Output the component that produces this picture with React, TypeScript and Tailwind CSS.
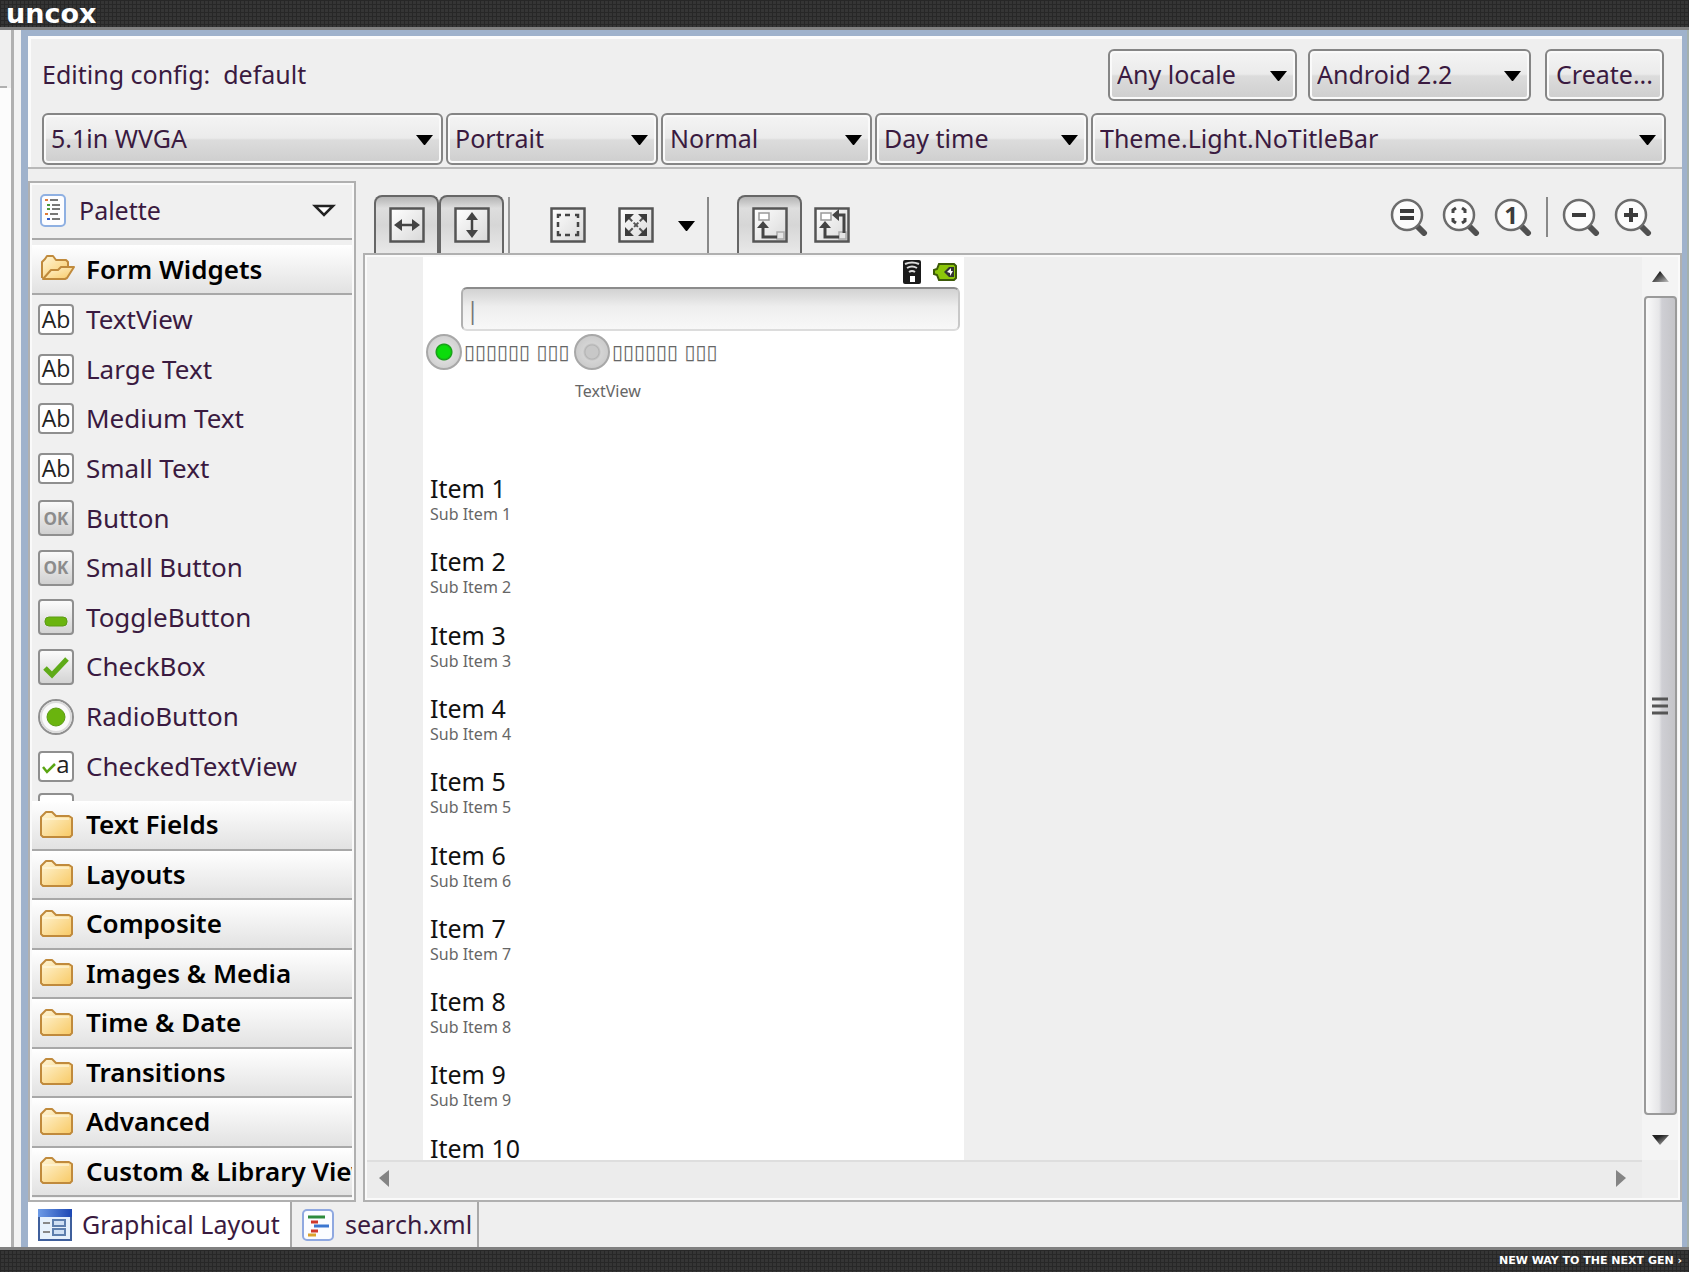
import React, { useState } from 'react';

const widgets = [
    { name: 'TextView', icon: 'ab' },
    { name: 'Large Text', icon: 'ab' },
    { name: 'Medium Text', icon: 'ab' },
    { name: 'Small Text', icon: 'ab' },
    { name: 'Button', icon: 'ok' },
    { name: 'Small Button', icon: 'ok' },
    { name: 'ToggleButton', icon: 'toggle' },
    { name: 'CheckBox', icon: 'check' },
    { name: 'RadioButton', icon: 'radio' },
    { name: 'CheckedTextView', icon: 'checked' },
];

const categories = [
    'Text Fields',
    'Layouts',
    'Composite',
    'Images & Media',
    'Time & Date',
    'Transitions',
    'Advanced',
    'Custom & Library Views',
];

const items = Array.from({ length: 10 }, (_, i) => i + 1);

const Defs = () => (
    <svg width="0" height="0" className="absolute" aria-hidden="true">
        <defs>
            <linearGradient id="metal" x1="0" y1="0" x2="0" y2="1">
                <stop offset="0" stopColor="#fdfdfd" />
                <stop offset="1" stopColor="#d2d2d2" />
            </linearGradient>
            <linearGradient id="tile" x1="0" y1="0" x2="1" y2="1">
                <stop offset="0" stopColor="#ffffff" />
                <stop offset="1" stopColor="#d8d8d8" />
            </linearGradient>
            <linearGradient id="gold" x1="0" y1="0" x2="1" y2="1">
                <stop offset="0" stopColor="#fff6d8" />
                <stop offset="1" stopColor="#f8c964" />
            </linearGradient>
            <linearGradient id="bluebar" x1="0" y1="0" x2="1" y2="0">
                <stop offset="0" stopColor="#6d9be6" />
                <stop offset="1" stopColor="#1c47b4" />
            </linearGradient>
            <linearGradient id="arrow" x1="0" y1="0" x2="1" y2="1">
                <stop offset="0.3" stopColor="#222222" />
                <stop offset="1" stopColor="#c4c4c4" />
            </linearGradient>
        </defs>
    </svg>
);

const Folder = () => (
    <svg width="36" height="30" viewBox="0 0 36 30" aria-hidden="true">
        <path d="M2 25V7l3-3 2-2h6l4 4h13l3 2v17l-2 2H4z" fill="url(#gold)" stroke="#c08a3c" strokeWidth="2" strokeLinejoin="round" />
        <path d="M4 9h26" fill="none" stroke="#fffbe9" strokeWidth="1" />
    </svg>
);

const OpenFolder = () => (
    <svg width="36" height="30" viewBox="0 0 36 30" aria-hidden="true">
        <path d="M3 24V8l3-3 2-3h6l3 4h10l2 2v6" fill="url(#gold)" stroke="#c08a3c" strokeWidth="2" strokeLinejoin="round" />
        <path d="M4 25l8-9h7l3-3h13l-7 11-2 1z" fill="url(#gold)" stroke="#c08a3c" strokeWidth="2" strokeLinejoin="round" />
    </svg>
);

const WidgetIcon = ({ kind }: { kind: string }) => {
    if (kind === 'ab') {
        return (
            <span className="flex h-[31px] w-9 items-center justify-center rounded border-2 border-[#8f8f8f] bg-white pb-px font-['Open_Sans',sans-serif] text-[23px] leading-none text-[#222]">
                Ab
            </span>
        );
    }
    if (kind === 'ok') {
        return (
            <span className="flex h-9 w-9 items-center justify-center rounded border-2 border-[#8f8f8f] bg-linear-to-b from-[#fafafa] to-[#d0d0d0] font-['Open_Sans',sans-serif] text-[17px] leading-none font-bold text-[#8c8c8c]">
                OK
            </span>
        );
    }
    if (kind === 'checked') {
        return (
            <span className="flex h-[31px] w-9 items-center justify-center rounded border-2 border-[#8f8f8f] bg-white font-['Open_Sans',sans-serif] text-[24px] leading-none text-[#222]">
                <svg width="14" height="12" viewBox="0 0 14 12" aria-hidden="true" className="mt-1">
                    <path d="M1 5l4 5 8-8" fill="none" stroke="#5aa512" strokeWidth="2.5" />
                </svg>
                <span className="-mt-1">a</span>
            </span>
        );
    }
    return (
        <svg width="36" height="36" viewBox="0 0 36 36" aria-hidden="true">
            {kind === 'radio' ? (
                <>
                    <circle cx="18" cy="18" r="17" fill="#fafafa" stroke="#8f8f8f" strokeWidth="2" />
                    <circle cx="18" cy="18" r="15" fill="none" stroke="#dcdcdc" strokeWidth="2" />
                    <circle cx="18" cy="18" r="9" fill="#6ab40e" stroke="#5c9c14" strokeWidth="1" />
                </>
            ) : (
                <rect x="1" y="1" width="34" height="34" rx="3" fill="url(#metal)" stroke="#8f8f8f" strokeWidth="2" />
            )}
            {kind === 'toggle' && <rect x="7" y="18" width="22" height="9" rx="4" fill="#6ab40e" stroke="#5c9c14" />}
            {kind === 'check' && <path d="M7 19l7 7 15-16" fill="none" stroke="#5fab18" strokeWidth="5" />}
        </svg>
    );
};

const Caret = ({ className = '' }: { className?: string }) => (
    <svg width="17" height="10" viewBox="0 0 17 10" className={className} aria-hidden="true">
        <path d="M0 0h17L9 10H8z" fill="#000" />
    </svg>
);

const Combo = ({ label, value, className = '' }: { label: string; value: string; className?: string }) => (
    <div className={`relative ${className}`}>
        <select
            aria-label={label}
            className="h-[52px] w-full appearance-none rounded-md border-2 border-[#858585] bg-[linear-gradient(#f4f4f4_0%,#ebebeb_48%,#dcdcdc_52%,#cecece_100%)] pr-8 pl-[7px] text-[25px] text-[#3a1a40] shadow-[inset_0_0_0_2px_#fafafa]"
        >
            <option>{value}</option>
        </select>
        <Caret className="pointer-events-none absolute top-[22px] right-[10px]" />
    </div>
);

const toolPaths: Record<string, React.ReactNode> = {
    width: (
        <>
            <path d="M9 18h18" stroke="#444" strokeWidth="2.5" />
            <path d="M5 18l8-6v12zM31 18l-8-6v12z" fill="#444" />
        </>
    ),
    height: (
        <>
            <path d="M18 9v18" stroke="#444" strokeWidth="2.5" />
            <path d="M18 5l-6 8h12zM18 31l-6-8h12z" fill="#444" />
        </>
    ),
    marquee: (
        <path d="M8 11V8h3M15 8h5M25 8h3v3M28 15v5M28 24v4h-3M20 28h-5M11 28H8v-4M8 20v-5" fill="none" stroke="#444" strokeWidth="2.5" />
    ),
    expand: (
        <>
            <path d="M10 10l16 16M26 10L10 26" stroke="#555" strokeWidth="2" strokeDasharray="6 2" />
            <path d="M7 7h9l-9 9zM29 7v9l-9-9zM7 29v-9l9 9zM29 29h-9l9-9z" fill="#3c3c3c" />
        </>
    ),
    parent: (
        <>
            <rect x="7" y="6" width="10" height="7" fill="#fff" stroke="#999" strokeWidth="1.5" />
            <rect x="25" y="25" width="7" height="7" fill="#e4e4e4" stroke="#aaa" strokeWidth="1.5" />
            <path d="M11 19v11h14" fill="none" stroke="#444" strokeWidth="3" />
            <path d="M11 14l-6 7h12z" fill="#444" />
        </>
    ),
    swap: (
        <>
            <rect x="7" y="6" width="10" height="7" fill="#fff" stroke="#999" strokeWidth="1.5" />
            <rect x="25" y="25" width="7" height="7" fill="#e4e4e4" stroke="#aaa" strokeWidth="1.5" />
            <path d="M11 19v11h14M24 8h6v18" fill="none" stroke="#444" strokeWidth="3" />
            <path d="M11 14l-6 7h12zM18 8l7-6v12z" fill="#444" />
        </>
    ),
};

const ToolIcon = ({ kind }: { kind: string }) => (
    <svg width="36" height="36" viewBox="0 0 36 36" aria-hidden="true">
        <rect x="1.5" y="1.5" width="33" height="33" fill="url(#tile)" stroke="#555" strokeWidth="2.5" />
        {toolPaths[kind]}
    </svg>
);

const ToolButton = ({ kind, label, pressed = false }: { kind: string; label: string; pressed?: boolean }) => (
    <button
        type="button"
        aria-label={label}
        aria-pressed={pressed}
        className={
            pressed
                ? 'flex h-[58px] w-[65px] items-center justify-center rounded-t-lg border-2 border-b-0 border-[#666] bg-[linear-gradient(#b4b4b4,#dedede_20%,#d6d6d6_50%,#e8e8e8)]'
                : 'flex h-[57px] w-9 items-center justify-center'
        }
    >
        <ToolIcon kind={kind} />
    </button>
);

const zoomMarks: Record<string, React.ReactNode> = {
    fit: <path d="M10 13h14M10 20h14" stroke="#3c3c3c" strokeWidth="4" />,
    frame: (
        <path d="M11 15v-3l3-2M20 10l3 2v3M23 20v3l-3 2M14 25l-3-2v-3" fill="none" stroke="#444" strokeWidth="3" />
    ),
    out: <path d="M10 17h14" stroke="#3c3c3c" strokeWidth="4" />,
    in: <path d="M10 17h14M17 10v14" stroke="#3c3c3c" strokeWidth="4" />,
};

const ZoomButton = ({ kind, label }: { kind: string; label: string }) => (
    <button type="button" aria-label={label} className="h-[38px] w-[38px]">
        <svg width="38" height="38" viewBox="0 0 38 38" aria-hidden="true">
            <path d="M26 27l8 8" stroke="#505050" strokeWidth="6" strokeLinecap="round" />
            <circle cx="17" cy="17" r="15" fill="#fcfcfc" stroke="#6c6c6c" strokeWidth="2.5" />
            {kind === 'one' ? (
                <text x="17" y="26" textAnchor="middle" fontFamily="Open Sans" fontWeight="700" fontSize="24" fill="#3c3c3c">
                    1
                </text>
            ) : (
                zoomMarks[kind]
            )}
        </svg>
    </button>
);

const Palette = () => (
    <aside className="flex w-[328px] shrink-0 flex-col overflow-hidden border-2 border-[#b0b0b0] bg-[#f0f0f0] px-0.5 text-[26px] shadow-[inset_0_0_0_2px_#fafafa]">
        <div className="flex h-[57px] shrink-0 items-center border-b-2 border-[#a8a8a8] pr-4 pl-[8px]">
            <svg width="26" height="33" viewBox="0 0 26 33" aria-hidden="true">
                <rect x="1" y="1" width="24" height="31" rx="4" fill="#fdfdff" stroke="#8fb0e2" strokeWidth="2" />
                <path d="M10 6h8M12 11h8M12 15h8M10 20h8M12 25h8" stroke="#777" strokeWidth="2" />
                <path d="M5 6h3M5 20h3" stroke="#e07b39" strokeWidth="2" />
                <path d="M7 11h3M7 15h3" stroke="#4b9a3c" strokeWidth="2" />
                <path d="M7 25h3" stroke="#3157c8" strokeWidth="2" />
            </svg>
            <span className="ml-[13px] flex-1 text-[25px] text-[#3a1a40]">Palette</span>
            <button type="button" aria-label="Palette menu">
                <svg width="24" height="14" viewBox="0 0 24 14" aria-hidden="true">
                    <path d="M3 2h18l-9 9z" fill="#fff" stroke="#222" strokeWidth="2.5" />
                </svg>
            </button>
        </div>
        <button
            type="button"
            className="mt-[5px] flex h-[50px] shrink-0 items-center gap-[11px] border-b-2 border-[#a8a8a8] bg-linear-to-b from-white to-[#e2e2e2] pl-[7px] text-left font-semibold text-black"
        >
            <OpenFolder />
            Form Widgets
        </button>
        <div className="flex-1 overflow-hidden">
            <ul className="grid h-124 auto-rows-fr text-[#3a1a40]">
                {widgets.map(w => (
                    <li key={w.name} className="flex items-center gap-3 pl-[6px]">
                        <WidgetIcon kind={w.icon} />
                        {w.name}
                    </li>
                ))}
            </ul>
            <div className="mt-0.5 ml-[6px] h-[31px] w-9 rounded border-2 border-[#8f8f8f] bg-white" />
        </div>
        <div className="grid h-[399px] shrink-0 auto-rows-fr pb-[3px]">
            {categories.map(name => (
                <button
                    key={name}
                    type="button"
                    className="flex items-center gap-[11px] overflow-hidden border-b-2 border-[#a8a8a8] bg-linear-to-b from-white to-[#e2e2e2] pl-[7px] text-left font-semibold whitespace-nowrap text-black"
                >
                    <span className="w-9 shrink-0">
                        <Folder />
                    </span>
                    {name}
                </button>
            ))}
        </div>
    </aside>
);

const Toolbar = () => (
    <div className="flex h-[72px] shrink-0 items-end justify-between pl-[11px]">
        <div className="flex items-end">
            <ToolButton kind="width" label="Toggle fill width" pressed />
            <ToolButton kind="height" label="Toggle fill height" pressed />
            <span className="ml-1 h-[56px] w-0.5 bg-[#999]" />
            <span className="ml-10">
                <ToolButton kind="marquee" label="Select" />
            </span>
            <span className="ml-8">
                <ToolButton kind="expand" label="Change size" />
            </span>
            <button type="button" aria-label="More sizes" className="ml-6 flex h-[55px] items-center">
                <Caret />
            </button>
            <span className="ml-3 h-[56px] w-0.5 bg-[#888]" />
            <span className="ml-7">
                <ToolButton kind="parent" label="Show parent" pressed />
            </span>
            <span className="ml-3">
                <ToolButton kind="swap" label="Show included" />
            </span>
        </div>
        <div className="flex items-center gap-[14px] self-center pr-[30px]">
            <ZoomButton kind="fit" label="Emulate real size" />
            <ZoomButton kind="frame" label="Zoom to fit" />
            <ZoomButton kind="one" label="Zoom to 100%" />
            <span className="h-10 w-0.5 bg-[#888]" />
            <ZoomButton kind="out" label="Zoom out" />
            <ZoomButton kind="in" label="Zoom in" />
        </div>
    </div>
);

const Phone = () => {
    const [picked, setPicked] = useState(0);

    return (
        <div className="ml-14 w-[541px] overflow-hidden bg-white text-[#666]">
            <div className="flex h-[30px] items-center justify-end gap-3 pr-[7px]">
                <svg width="18" height="24" viewBox="0 0 18 24" aria-hidden="true">
                    <rect width="18" height="24" rx="2" fill="#1a1a1a" />
                    <path d="M2 4q7-3 14 0M4 8q5-3 10 0M6 12q3-2 6 0" fill="none" stroke="#ddd" strokeWidth="2" />
                    <rect x="7" y="16" width="5" height="6" fill="#fff" />
                </svg>
                <svg width="24" height="20" viewBox="0 0 24 20" aria-hidden="true">
                    <path d="M1 8l3-1 2-5h15l2 2v12l-2 2H6l-2-5-3-1z" fill="#8cc60a" stroke="#3d5a08" strokeWidth="2" />
                    <path d="M11 10l5-5h5v10h-5z" fill="#333" />
                    <path d="M14 10l4-4v3h2l-3 5v-3z" fill="#fff" />
                </svg>
            </div>
            <input
                aria-label="Search"
                defaultValue="|"
                className="mr-1 ml-[38px] block h-[44px] w-[499px] rounded-md border-2 border-t-[#8c8c8c] border-r-[#c8c8c8] border-b-[#dcdcdc] border-l-[#b0b0b0] bg-[linear-gradient(#d2d2d2,#eeeeee_45%,#f8f8f8)] px-[3px] font-['Open_Sans',sans-serif] text-[24px] text-[#777]"
            />
            <div className="mt-0.5 flex pl-[3px]">
                {[0, 1].map(i => (
                    <label key={i} className="flex h-[38px] w-[148px] items-center gap-0.5 font-['DejaVu_Sans',sans-serif] text-[20px] whitespace-nowrap">
                        <input
                            type="radio"
                            name="mode"
                            checked={picked === i}
                            onChange={() => setPicked(i)}
                            className="h-9 w-9 shrink-0 appearance-none rounded-full border-2 border-[#a8a8a8] bg-[radial-gradient(circle,#c8c8c8_0_6px,#b4b4b4_7px,#d4d4d4_9px,#c4c4c4_100%)] checked:bg-[radial-gradient(circle,#0bdc0b_0_6px,#1a9a1a_8px,#dcdcdc_9px,#c8c8c8_100%)]"
                        />
                        ▯▯▯▯▯▯ ▯▯▯
                    </label>
                ))}
            </div>
            <p className="mt-2 pl-[152px] text-[16px] leading-6">TextView</p>
            <ul className="mt-[69px] grid h-[733px] auto-rows-fr">
                {items.map(n => (
                    <li key={n} className="flex flex-col pl-[7px]">
                        <span className="text-[25px] leading-8 text-[#111]">Item {n}</span>
                        <span className="text-[16px] leading-5">Sub Item {n}</span>
                    </li>
                ))}
            </ul>
        </div>
    );
};

const Canvas = () => (
    <div className="grid min-h-0 flex-1 grid-cols-[1fr_36px] grid-rows-[1fr_38px] border-2 border-[#b0b0b0] bg-[#efefef] p-0.5 shadow-[inset_0_0_0_2px_#fafafa]">
        <div className="flex min-h-0 overflow-hidden">
            <Phone />
        </div>
        <div className="flex flex-col items-center bg-[#f4f4f4]">
            <button type="button" aria-label="Scroll up" className="flex h-[39px] items-center">
                <svg width="17" height="11" viewBox="0 0 17 11" aria-hidden="true">
                    <path d="M8 0l9 11H0z" fill="url(#arrow)" />
                </svg>
            </button>
            <div className="flex w-[33px] flex-1 items-center justify-center rounded border-2 border-[#9a9a9a] bg-[linear-gradient(90deg,#fafafa,#e6e6e8_45%,#cfcfd4_55%,#c4c4c8)]">
                <svg width="16" height="18" viewBox="0 0 16 18" aria-hidden="true">
                    <path d="M0 2h16M0 9h16M0 16h16" stroke="#555" strokeWidth="3" />
                </svg>
            </div>
            <button type="button" aria-label="Scroll down" className="flex h-[45px] items-center pt-1">
                <svg width="17" height="10" viewBox="0 0 17 10" aria-hidden="true">
                    <path d="M0 0h17L8 10z" fill="url(#arrow)" />
                </svg>
            </button>
        </div>
        <div className="flex items-center justify-between border-t-2 border-[#dedede] bg-[#ececec] pr-4 pb-1 pl-3">
            <button type="button" aria-label="Scroll left">
                <svg width="10" height="17" viewBox="0 0 10 17" aria-hidden="true">
                    <path d="M10 0v17L0 8z" fill="#848484" />
                </svg>
            </button>
            <button type="button" aria-label="Scroll right">
                <svg width="10" height="17" viewBox="0 0 10 17" aria-hidden="true">
                    <path d="M0 0v17l10-9z" fill="#848484" />
                </svg>
            </button>
        </div>
    </div>
);

const strip = 'bg-[#353535] bg-[linear-gradient(#272727_1px,transparent_1px),linear-gradient(90deg,#272727_1px,transparent_1px)] bg-[size:4px_4px]';

const App: React.FC = () => (
    <div className="flex h-screen flex-col overflow-hidden bg-[#efefef] font-['Noto_Sans','Open_Sans',sans-serif]">
        <Defs />
        <header className={`flex h-[30px] shrink-0 items-end border-b-3 border-[#808080] pl-[6px] ${strip}`}>
            <h1 className="font-['DejaVu_Sans',sans-serif] text-[27px] leading-[27px] font-bold text-white">uncox</h1>
        </header>

        <div className="flex min-h-0 flex-1">
            <div className="flex w-[21px] shrink-0">
                <div className="flex w-[11px] flex-col">
                    <div className="h-[58px] w-[7px] border-b-2 border-[#b0b0b0]" />
                    <div className="flex-1 bg-[#fcfcfc]" />
                </div>
                <div className="w-[3px] bg-[#b0b0b0]" />
                <div className="flex-1 bg-[#f2f2f2]" />
            </div>
            <div className="flex min-w-0 flex-1 flex-col border-t-6 border-r-5 border-l-7 border-[#9fb2cc]">
                <section className="shrink-0 border-b-2 border-[#b9b9b9] pt-3 pr-[16px] pb-0.5 pl-[14px] text-[25px] text-[#3a1a40] shadow-[inset_3px_3px_0_#fbfbfb]">
                    <div className="flex h-[53px] items-center">
                        <p className="flex-1">
                            Editing config:&nbsp; default
                        </p>
                        <Combo label="Locale" value="Any locale" className="w-[189px]" />
                        <Combo label="Target" value="Android 2.2" className="ml-[11px] w-[223px]" />
                        <button
                            type="button"
                            className="mr-0.5 ml-[14px] h-[52px] w-[119px] rounded-md border-2 border-[#858585] bg-[linear-gradient(#f4f4f4_0%,#ebebeb_48%,#dcdcdc_52%,#cecece_100%)] shadow-[inset_0_0_0_2px_#fafafa]"
                        >
                            Create...
                        </button>
                    </div>
                    <div className="mt-3 grid grid-cols-[401fr_212fr_211fr_213fr_575fr] gap-[3px]">
                        <Combo label="Screen" value="5.1in WVGA" />
                        <Combo label="Orientation" value="Portrait" />
                        <Combo label="Dock mode" value="Normal" />
                        <Combo label="Night mode" value="Day time" />
                        <Combo label="Theme" value="Theme.Light.NoTitleBar" />
                    </div>
                </section>

                <div className="flex min-h-0 flex-1 gap-[7px] pt-3">
                    <Palette />
                    <section className="flex min-w-0 flex-1 flex-col">
                        <Toolbar />
                        <Canvas />
                    </section>
                </div>

                <nav className="flex h-[45px] shrink-0 text-[25px] text-[#3a1a40]">
                    <button type="button" className="flex w-[262px] items-center gap-[10px] bg-white pl-[10px] whitespace-nowrap">
                        <svg width="34" height="32" viewBox="0 0 34 32" aria-hidden="true" className="shrink-0">
                            <rect x="1" y="1" width="32" height="30" fill="#e6f1fc" stroke="#3f5f9c" strokeWidth="2" />
                            <rect x="0" y="0" width="34" height="8" fill="url(#bluebar)" />
                            <path d="M5 14h7M5 23h7" stroke="#888" strokeWidth="2" />
                            <rect x="15" y="11" width="12" height="6" fill="#cfe0f4" stroke="#5d7fae" strokeWidth="2" />
                            <rect x="15" y="20" width="12" height="6" fill="#cfe0f4" stroke="#5d7fae" strokeWidth="2" />
                        </svg>
                        Graphical Layout
                    </button>
                    <button type="button" className="flex w-[189px] items-center gap-[11px] border-x-2 border-[#a8a8a8] pl-[10px] whitespace-nowrap">
                        <svg width="32" height="32" viewBox="0 0 32 32" aria-hidden="true" className="shrink-0">
                            <rect x="1" y="1" width="30" height="30" rx="4" fill="#fbfcff" stroke="#8fa8e0" strokeWidth="2" />
                            <path d="M6 8h17" stroke="#2e8b3d" strokeWidth="3" />
                            <path d="M9 13h7M9 22h7" stroke="#d0382c" strokeWidth="3" />
                            <path d="M12 17h15" stroke="#3b76d0" strokeWidth="3" />
                            <path d="M6 26h8" stroke="#dba32c" strokeWidth="3" />
                        </svg>
                        search.xml
                    </button>
                </nav>
            </div>
            <div className="w-0.5 shrink-0 bg-[#a4b0ac]" />
        </div>

        <footer className={`flex h-[25px] shrink-0 items-center justify-end border-t-3 border-[#808080] pr-[7px] ${strip}`}>
            <p className="font-['DejaVu_Sans',sans-serif] text-[11px] leading-4 font-bold text-white">NEW WAY TO THE NEXT GEN ›</p>
        </footer>
    </div>
);

export default App;
